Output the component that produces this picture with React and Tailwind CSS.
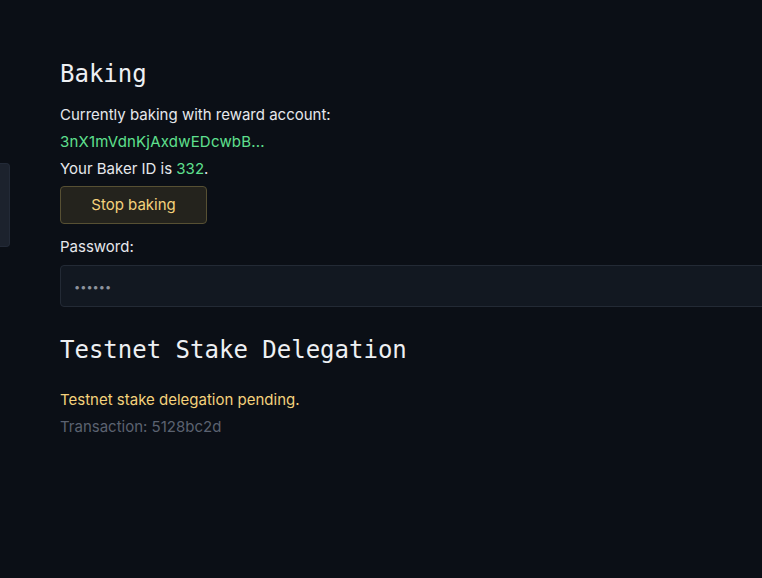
export default function App() {
  const sans = { fontFamily: '"Inter", "Open Sans", sans-serif' };
  return (
    <div className="relative w-[762px] h-[578px] overflow-hidden bg-[#0b0f16] text-[#e6e8ec]" style={sans}>
      <div className="absolute left-0 top-[163px] w-[10px] h-[84px] rounded-r-[4px] bg-[#1c222d] border border-l-0 border-[#232a37]" />
      <div className="pl-[60px] pt-[58px] flex flex-col items-start">
        <h2 className="text-[24px] leading-[32px] text-[#eef0f3] [font-family:'DejaVu_Sans_Mono','Liberation_Mono',monospace]">Baking</h2>
        <p className="mt-[11px] text-[15px] leading-[27px]">Currently baking with reward account:</p>
        <p className="text-[15px] leading-[27px] text-[#5fe08f] tracking-[0.2px]">3nX1mVdnKjAxdwEDcwbB...</p>
        <p className="text-[15px] leading-[27px]">Your Baker ID is <span className="text-[#5fe08f]">332</span>.</p>
        <button className="mt-[4px] w-[147px] h-[38px] rounded-[4px] bg-[#24231d] border border-[#575033] text-[#f4d27c] text-[15px]">Stop baking</button>
        <label className="mt-[11px] text-[15px] leading-[24px]">Password:</label>
        <div className="mt-[6px] w-[760px] h-[42px] rounded-[4px] bg-[#121821] border border-[#232a35] flex items-center pl-[13px] pt-[2px] text-[#8d939d] text-[11px] tracking-[0px]">••••••</div>
        <h2 className="mt-[27px] text-[24px] leading-[32px] text-[#eef0f3] [font-family:'DejaVu_Sans_Mono','Liberation_Mono',monospace]">Testnet Stake Delegation</h2>
        <p className="mt-[20px] text-[15px] leading-[27px] text-[#f4d27c]">Testnet stake delegation pending.</p>
        <p className="text-[15px] leading-[27px] text-[#5b6270]">Transaction: 5128bc2d</p>
      </div>
    </div>
  );
}
